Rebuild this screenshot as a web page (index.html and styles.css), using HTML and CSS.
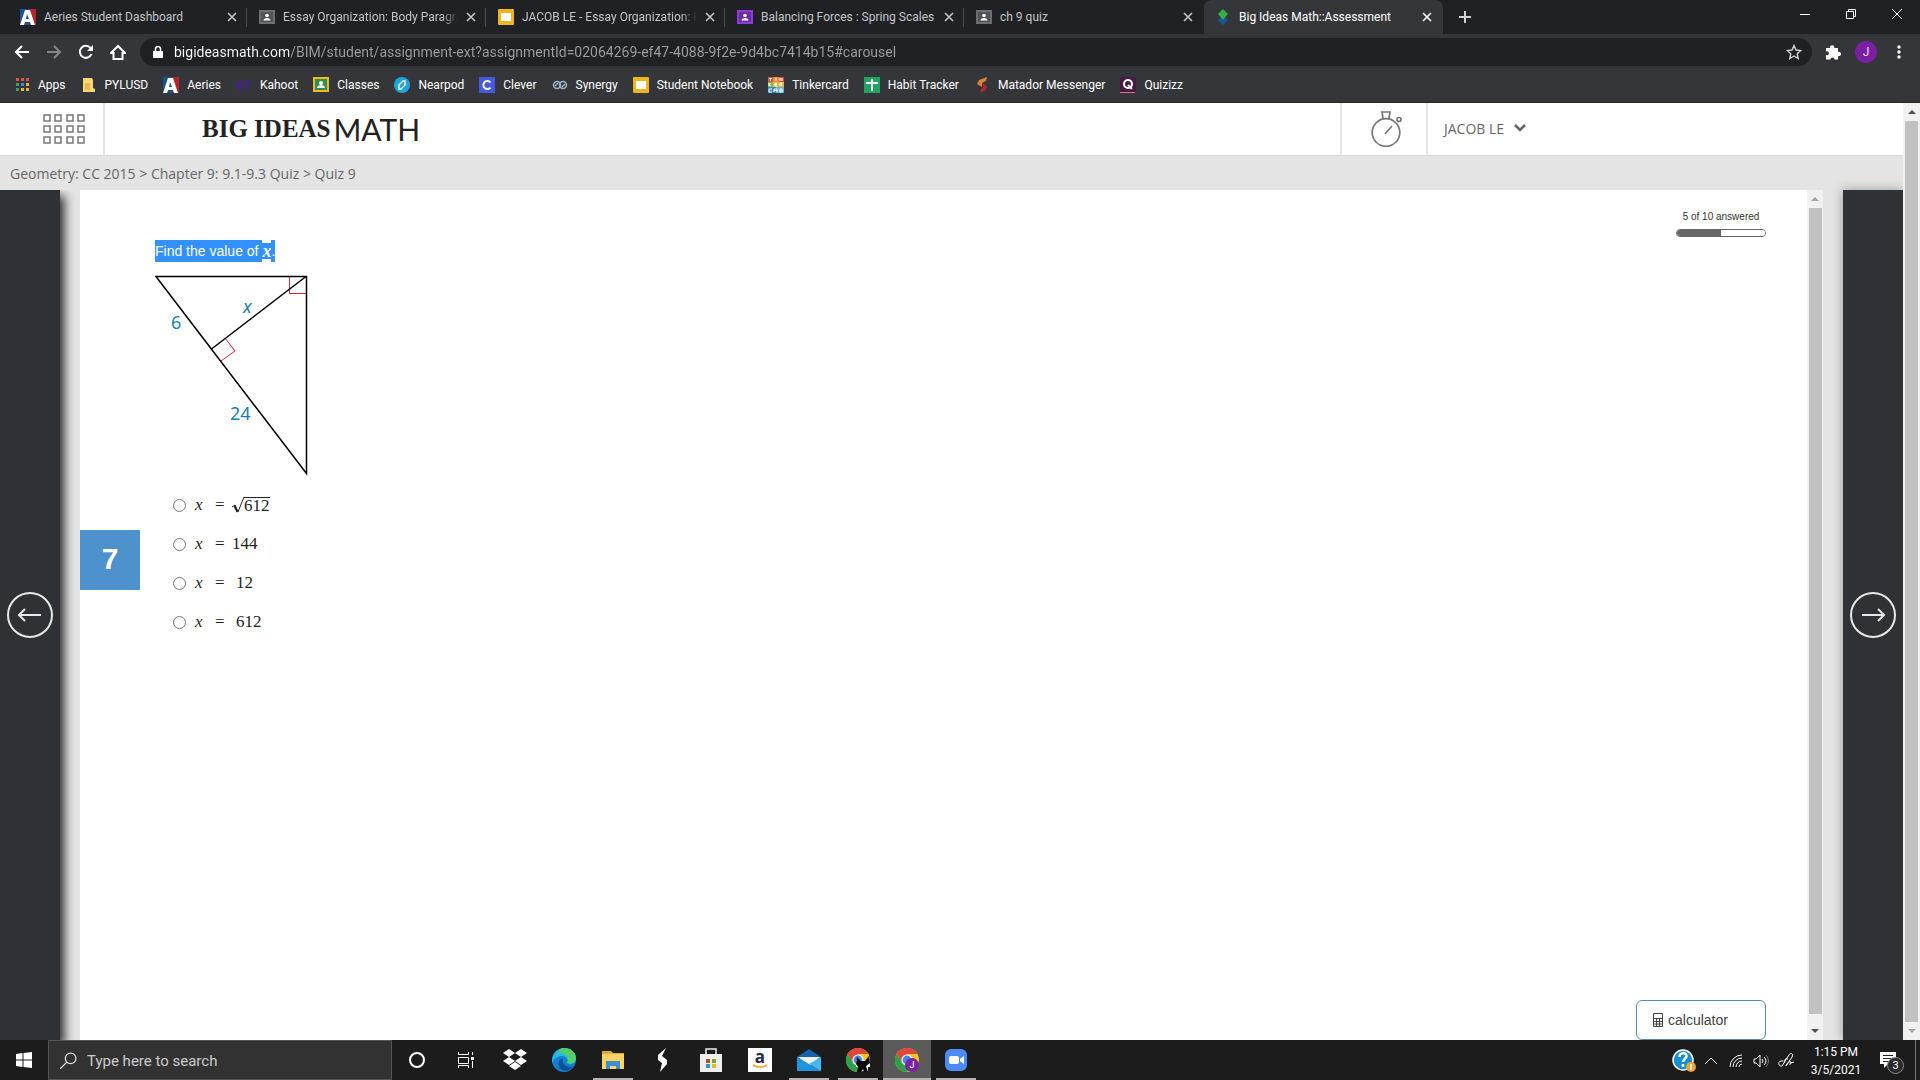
FILE: index.html
```html
<!DOCTYPE html>
<html lang="en">
<head>
  <meta charset="UTF-8">
  <meta name="viewport" content="width=device-width, initial-scale=1.0">
  <title>Big Ideas Math::Assessment</title>
  <link rel="stylesheet" href="styles.css">
</head>
<body>
  <!-- shared icons -->
  <svg class="defs" aria-hidden="true">
    <symbol id="aeries" viewBox="0 0 16 16"><path fill="#1c4f93" d="M0 0h10v16H0z"/><path fill="#b5232c" d="M10 0h6v16h-6z"/><path fill="#fff" d="M5 1h5l5 15h-4l-1-3H5l-1 3H0zm2 4l-1 5h3z"/></symbol>
    <symbol id="classroom" viewBox="0 0 16 16"><path fill="currentColor" d="M0 1h16v14H0z"/><path fill="#000" fill-opacity=".25" d="M2 3h12v10H2z"/><circle cx="8" cy="6.500" r="1.800" fill="#fff"/><path fill="#fff" d="M4.500 11.500c0-3.500 7-3.500 7 0z"/></symbol>
    <symbol id="slides" viewBox="0 0 16 16"><rect width="16" height="16" rx="1" fill="#f0b51b"/><path fill="#fff" d="M3 4h10v8H3z"/></symbol>
    <symbol id="close" viewBox="0 0 10 10"><path d="M1 1l8 8M9 1L1 9" stroke="currentColor" stroke-width="1.600" fill="none"/></symbol>
    <symbol id="chrome" viewBox="0 0 24 24"><circle cx="12" cy="12" r="12" fill="#f5c623"/><path fill="#e0463c" d="M1.600 6A12 12 0 0 1 22.400 6H12L7 15z"/><path fill="#2ba14b" d="M1.600 6A12 12 0 0 0 12 24l5-9-5 3-5-3z"/><circle cx="12" cy="12" r="5.600" fill="#fff"/><circle cx="12" cy="12" r="4.400" fill="#4683ea"/></symbol>
  </svg>

  <header class="browser">
    <div class="tab-strip">
      <div class="tab"><svg class="icon"><use href="#aeries"/></svg><span class="tab-title">Aeries Student Dashboard</span><button class="tab-close" aria-label="Close tab"><svg><use href="#close"/></svg></button></div>
      <div class="tab"><svg class="icon gray"><use href="#classroom"/></svg><span class="tab-title fade">Essay Organization: Body Paragraph</span><button class="tab-close" aria-label="Close tab"><svg><use href="#close"/></svg></button></div>
      <div class="tab"><svg class="icon"><use href="#slides"/></svg><span class="tab-title fade">JACOB LE - Essay Organization: Body</span><button class="tab-close" aria-label="Close tab"><svg><use href="#close"/></svg></button></div>
      <div class="tab"><svg class="icon purple"><use href="#classroom"/></svg><span class="tab-title">Balancing Forces : Spring Scales</span><button class="tab-close" aria-label="Close tab"><svg><use href="#close"/></svg></button></div>
      <div class="tab"><svg class="icon gray"><use href="#classroom"/></svg><span class="tab-title">ch 9 quiz</span><button class="tab-close" aria-label="Close tab"><svg><use href="#close"/></svg></button></div>
      <div class="tab active"><svg class="icon" viewBox="0 0 16 16"><path fill="#17579d" d="M8 6l5 5-5 5-5-5z"/><path fill="#3aaa45" d="M8 0l5 5-5 6-5-6z"/></svg><span class="tab-title">Big Ideas Math::Assessment</span><button class="tab-close" aria-label="Close tab"><svg><use href="#close"/></svg></button></div>
      <button class="new-tab" aria-label="New tab"><svg viewBox="0 0 12 12"><path d="M6 0v12M0 6h12" stroke="currentColor" stroke-width="2"/></svg></button>
      <div class="window-buttons">
        <button aria-label="Minimize"><svg viewBox="0 0 10 10"><path d="M0 5.500h10"/></svg></button>
        <button aria-label="Restore"><svg viewBox="0 0 10 10"><path d="M.5 2.500h7v7h-7zM2.500 2.500v-2h7v7h-2"/></svg></button>
        <button aria-label="Close"><svg viewBox="0 0 10 10"><path d="M0 0l10 10M10 0L0 10"/></svg></button>
      </div>
    </div>

    <div class="toolbar">
      <button aria-label="Back"><svg viewBox="0 0 16 16"><path d="M15 8H2M8 2L2 8l6 6"/></svg></button>
      <button aria-label="Forward" class="dim"><svg viewBox="0 0 16 16"><path d="M1 8h13M8 2l6 6-6 6"/></svg></button>
      <button aria-label="Reload"><svg viewBox="0 0 16 16"><path d="M13.500 10A6 6 0 1 1 12.500 4"/><path d="M15 1v6H9z" fill="currentColor" stroke="none"/></svg></button>
      <button aria-label="Home"><svg viewBox="0 0 16 16"><path d="M1 9l7-7 7 7h-2.500v6h-9V9z"/></svg></button>
      <div class="omnibox">
        <svg class="lock" viewBox="0 0 10 12"><path fill="currentColor" d="M0 5h10v7H0z"/><path d="M2.500 5V3a2.500 2.500 0 0 1 5 0v2" fill="none" stroke="currentColor" stroke-width="1.500"/></svg>
        <input class="url" type="text" aria-label="Address" value="bigideasmath.com/BIM/student/assignment-ext?assignmentId=02064269-ef47-4088-9f2e-9d4bc7414b15#carousel">
        <svg class="star" viewBox="0 0 16 16"><path d="M8 1.500l2 4.500 4.800.5-3.600 3.200 1 4.800L8 12l-4.200 2.500 1-4.800L1.200 6.500 6 6z" fill="none" stroke="currentColor" stroke-width="1.400"/></svg>
      </div>
      <button aria-label="Extensions"><svg viewBox="0 0 16 16"><path fill="currentColor" stroke="none" d="M1 4h4a2.200 2.200 0 1 1 4.200 0H13v4a2.200 2.200 0 1 1 0 4v3.500H9.500a2 2 0 1 0-4 0H1V11a2 2 0 1 0 0-3.500z"/></svg></button>
      <button class="avatar" aria-label="Profile">J</button>
      <button aria-label="Menu"><svg viewBox="0 0 16 16"><g fill="currentColor" stroke="none"><circle cx="8" cy="3" r="1.700"/><circle cx="8" cy="8" r="1.700"/><circle cx="8" cy="13" r="1.700"/></g></svg></button>
    </div>

    <nav class="bookmarks">
      <a href="#"><svg viewBox="0 0 16 16"><path fill="#dc5246" d="M2 1h3v3H2zM7 1h3v3H7zM12 1h3v3h-3z"/><path fill="#3f9c5c" d="M2 6h3v3H2z"/><path fill="#4a80d8" d="M7 6h3v3H7z"/><path fill="#e5b53a" d="M12 6h3v3h-3zM7 11h3v3H7zM12 11h3v3h-3z"/><path fill="#3f9c5c" d="M2 11h3v3H2z"/></svg>Apps</a>
      <a href="#"><svg viewBox="0 0 16 16"><path fill="#f8d775" d="M2 1h9l1 2v8l2 1v3H2z"/><path fill="#e9b94a" d="M4 6h5v7H4z"/></svg>PYLUSD</a>
      <a href="#"><svg><use href="#aeries"/></svg>Aeries</a>
      <a href="#"><svg viewBox="0 0 16 16"><path d="M2 4v9M7 4l-4 4 4 5M9 4l3 9M11 9l2-5" stroke="#46208a" stroke-width="2" fill="none"/></svg>Kahoot</a>
      <a href="#"><svg viewBox="0 0 16 16"><path fill="#f4b827" d="M0 0h16v15H0z"/><path fill="#2d9150" d="M2 2h12v11H2z"/><circle cx="8" cy="6" r="2" fill="#fff"/><path fill="#fff" d="M4 11c0-4 8-4 8 0z"/></svg>Classes</a>
      <a href="#"><svg viewBox="0 0 16 16"><circle cx="8" cy="8" r="8" fill="#1fa5dc"/><path d="M5 11V8l4-4h2v4l-4 4H5z" fill="none" stroke="#fff" stroke-width="1.300"/></svg>Nearpod</a>
      <a href="#"><svg viewBox="0 0 16 16"><path fill="#4858e0" d="M0 0h16v16H0z"/><path d="M11.500 5.500a4 4 0 1 0 0 5" fill="none" stroke="#fff" stroke-width="2"/></svg>Clever</a>
      <a href="#"><svg viewBox="0 0 16 16"><g fill="none" stroke="#9fb4c2" stroke-width="1.500"><circle cx="5" cy="8" r="3.500"/><circle cx="11" cy="8" r="3.500"/><path d="M3 9l3-3M10 10l3-3"/></g></svg>Synergy</a>
      <a href="#"><svg><use href="#slides"/></svg>Student Notebook</a>
      <a href="#"><svg viewBox="0 0 16 16"><path fill="#df5338" d="M0 0h5v5H0z"/><path fill="#ed8c35" d="M5 0h6v5H5z"/><path fill="#d7473b" d="M11 0h5v5h-5z"/><path fill="#8fba48" d="M0 5h5v5H0z"/><path fill="#e8b43a" d="M5 5h11v5H5z"/><path fill="#2c8cc4" d="M0 10h8v6H0z"/><path fill="#63b6d8" d="M8 10h8v6H8z"/><path stroke="#fff" d="M1 1.500h3M2.500 1v3M8 1v3M12 4V1l2 3V1M1 6v3M3 6L1 8l2 1M7 6v3h2M7 7.500h2M7 6.500h2M12 9V6h2l-1 2 1 1M4 12H1v3h3M6 15v-3h3v3M6 13.500h3M12 12v3h2v-3z" fill="none"/></svg>Tinkercard</a>
      <a href="#"><svg viewBox="0 0 16 16"><path fill="#1fa463" d="M0 0h16v16H0z"/><path fill="#fff" d="M7 2h2v12H7zM2 5h12v2H2z"/></svg>Habit Tracker</a>
      <a href="#"><svg viewBox="0 0 16 16"><path fill="#d58438" d="M13 0L5 3 3 7l5 3V6l4-2z"/><path fill="#a92b2b" d="M8 6l5 3-1 4-6 3 1-4 2-1z"/></svg>Matador Messenger</a>
      <a href="#"><svg viewBox="0 0 16 16"><path fill="#461a42" d="M0 0h16v16H0z"/><circle cx="8" cy="7" r="4" fill="none" stroke="#fff" stroke-width="2"/><path d="M8 8l4 4" stroke="#fff" stroke-width="2"/><path d="M0 15.500h15" stroke="#d9728c"/></svg>Quizizz</a>
    </nav>
  </header>

  <div class="viewport">
    <div class="page">
      <div class="site-header">
        <button class="apps" aria-label="Menu"><svg viewBox="0 0 42 30" fill="none" stroke="#777" stroke-width="1.500"><path d="M1 1h6v6H1zM12 1h6v6h-6zM24 1h6v6h-6zM35 1h6v6h-6zM1 12h6v6H1zM12 12h6v6h-6zM24 12h6v6h-6zM35 12h6v6h-6zM1 23h6v6H1zM12 23h6v6h-6zM24 23h6v6h-6zM35 23h6v6h-6z"/></svg></button>
        <h1 class="logo"><span class="logo-serif">BIG IDEAS</span> <span class="logo-sans">MATH</span></h1>
        <button class="timer" aria-label="Timer"><svg viewBox="0 0 32 36" fill="none" stroke="#777" stroke-width="1.700"><circle cx="15" cy="21.500" r="13.800"/><path d="M12 7.500L11 1h8l-1 6.500M14 23l7-8"/><circle cx="28" cy="8.500" r="2"/></svg></button>
        <button class="user">JACOB LE <svg viewBox="0 0 12 8"><path d="M1 1l5 5 5-5" fill="none" stroke="currentColor" stroke-width="2.500"/></svg></button>
      </div>
      <div class="breadcrumb">Geometry: CC 2015 &gt; Chapter 9: 9.1-9.3 Quiz &gt; Quiz 9</div>

      <main class="carousel">
        <div class="rail rail-left"><button aria-label="Previous question"><svg viewBox="0 0 46 46"><circle cx="23" cy="23" r="22"/><path d="M34 23H13M18 17l-6 6 6 6"/></svg></button></div>

        <section class="question">
          <div class="number">7</div>
          <div class="body">
            <p class="prompt"><mark>Find the value of </mark><mark class="var">x</mark><mark>.</mark></p>
            <svg class="figure" viewBox="0 0 160 206" role="img" aria-label="Right triangle with altitude x">
              <g fill="none" stroke="#e0263c"><path d="M134.500 4v16.500H151M70 65l10 13-14 10"/></g>
              <path d="M1 3.500h150.500v197zM151 3.500L56.500 76" fill="none" stroke="#000" stroke-width="1.500"/>
              <g class="labels"><text x="88" y="40" font-style="italic">x</text><text x="16" y="56">6</text><text x="75" y="147">24</text></g>
            </svg>
            <div class="choices">
              <label><input type="radio" name="answer"><i>x</i><span class="eq">=</span><span class="root"><svg viewBox="0 0 12 18"><path d="M0 11l3-2 3 7L12 1" fill="none" stroke="currentColor"/><path d="M2.500 10l3 6" stroke="currentColor" stroke-width="2"/></svg><span class="radicand">612</span></span></label>
              <label><input type="radio" name="answer"><i>x</i><span class="eq">=</span>144</label>
              <label><input type="radio" name="answer"><i>x</i><span class="eq">=</span><span class="spaced">12</span></label>
              <label><input type="radio" name="answer"><i>x</i><span class="eq">=</span><span class="spaced">612</span></label>
            </div>
          </div>
          <div class="side">
            <div class="answered"><label for="answered">5 of 10 answered</label><progress id="answered" value="5" max="10"></progress></div>
            <button class="calculator"><svg viewBox="0 0 10 14" fill="none" stroke="currentColor"><path d="M.5.5h9v13h-9zM.5 5.500h9M.5 8.500h9M.5 11h9M3.500 5.500v8M6.500 5.500v8"/></svg>calculator</button>
          </div>
        </section>
        <div class="scrollbar inner"><span class="arrow up"></span><span class="thumb"></span><span class="arrow down"></span></div>

        <div class="rail rail-right"><button aria-label="Next question"><svg viewBox="0 0 46 46"><circle cx="23" cy="23" r="22"/><path d="M12 23h21M28 17l6 6-6 6"/></svg></button></div>
      </main>
    </div>
    <div class="scrollbar outer"><span class="arrow up"></span><span class="thumb"></span><span class="arrow down"></span></div>
  </div>

  <footer class="taskbar">
    <button class="start" aria-label="Start"><svg viewBox="0 0 16 16"><path fill="#fff" d="M0 2l6.500-1v6.500H0zM7.500 1L16 0v7.500H7.500zM0 8.500h6.500V15L0 14zM7.500 8.500H16V16l-8.500-1z"/></svg></button>
    <label class="search"><svg viewBox="0 0 16 16" fill="none" stroke="#ddd" stroke-width="1.200"><circle cx="10" cy="6" r="5"/><path d="M6.500 9.500L0 16"/></svg><input type="text" placeholder="Type here to search" aria-label="Search"></label>
    <div class="apps-row">
      <button aria-label="Cortana"><svg viewBox="0 0 24 24"><circle cx="12" cy="12" r="7" fill="none" stroke="#fff" stroke-width="2"/></svg></button>
      <button aria-label="Task view"><svg viewBox="0 0 24 24"><path d="M4.500 4v2.500h10V4M4.500 20v-2.500h10V20M4.500 9.500h10v6h-10zM18.500 4v3M18.500 13v7" fill="none" stroke="#fff"/><path fill="#fff" d="M17 9h3v3h-3z"/></svg></button>
      <button aria-label="Dropbox"><svg viewBox="0 0 24 24"><path fill="#fff" d="M6 1l6 4-6 4-6-4zM18 1l6 4-6 4-6-4zM6 9l6 4-6 4-6-4zM18 9l6 4-6 4-6-4zM12 14l6 4-6 4-6-4z"/></svg></button>
      <button aria-label="Edge"><svg viewBox="0 0 24 24"><circle cx="12" cy="12" r="12" fill="#1580d3"/><path fill="#29b8e0" d="M0 12C1 4 7 0 12 0c7 0 12 5 12 10 0 5-5 7-9 5 2-3 0-7-5-7-5 0-9 3-10 8z"/><path fill="#4fd06d" d="M12 0c7 0 12 5 12 10 0 5-5 7-9 5 3-5-1-10-8-10 0-3 2-5 5-5z"/><path fill="#0f4f96" d="M11 10c-2 6 4 11 11 8-3 4-8 6-12 4-5-3-5-10 1-12z"/></svg></button>
      <button class="open" aria-label="File Explorer"><svg viewBox="0 0 24 24"><path fill="#e1a92e" d="M1 3h9l2 2h11v4H1z"/><path fill="#fbd467" d="M1 6h22v15H1z"/><path fill="#3d8fd1" d="M5 13h14v8h-4v-3H9v3H5z"/></svg></button>
      <button aria-label="Stride"><svg viewBox="0 0 24 24"><path fill="#fff" d="M16 0L8 7v5l4 3-2 9 7-8v-4l-5-4z"/></svg></button>
      <button aria-label="Store"><svg viewBox="0 0 24 24"><path d="M7 7V1h10v6" fill="none" stroke="#eee" stroke-width="1.500"/><path fill="#eee" d="M1 6h22v18H1z"/><path fill="#b3541e" d="M7 11h4v4H7z"/><path fill="#79a72c" d="M13 11h4v4h-4z"/><path fill="#2b93d1" d="M7 16h4v4H7z"/><path fill="#efb52d" d="M13 16h4v4h-4z"/></svg></button>
      <button aria-label="Amazon"><svg viewBox="0 0 24 24"><path fill="#fff" d="M0 0h24v24H0z"/><text x="12" y="15" text-anchor="middle" class="amazon">a</text><path d="M5 17c5 3 9 3 14 0" fill="none" stroke="#f4a12b" stroke-width="1.500"/></svg></button>
      <button class="open" aria-label="Mail"><svg viewBox="0 0 24 24"><path fill="#1464ad" d="M0 9l12-8 12 8v6H0z"/><path fill="#f1f1f1" d="M1 9h22l-10 9z"/><path fill="#1e94dd" d="M0 9l24 14H0z"/><path fill="#49b5ee" d="M24 9v14L12 16z"/></svg></button>
      <button class="open" aria-label="Chrome"><svg viewBox="0 0 24 24"><use href="#chrome"/><path fill="#fff" d="M10 12h4l3 2 3-2h4v7h-2v4H12v-4h-2z"/><path fill="#080808" d="M11 9l4 4h4l4-5 1 7-4 3 2 6h-4l-1-3-2 3h-4l1-5-2-3z"/></svg></button>
      <button class="open current" aria-label="Chrome, J"><svg viewBox="0 0 24 24"><use href="#chrome"/><circle cx="17" cy="17" r="7" fill="#7724a5"/><text x="17" y="20" text-anchor="middle" class="badge-j">J</text></svg></button>
      <button class="open" aria-label="Zoom"><svg viewBox="0 0 24 24"><rect x="1" y="1" width="22" height="22" rx="6" fill="#4a8cf5"/><rect x="5" y="8" width="10" height="8" rx="2" fill="#fff"/><path fill="#fff" d="M16 11l4-3v8l-4-3z"/></svg></button>
    </div>
    <div class="tray">
      <svg class="help" viewBox="0 0 24 24"><circle cx="11" cy="11" r="10" fill="#1791cb" stroke="#fff" stroke-width="1.500"/><path d="M7.500 8c0-5 7-5 7-1 0 3-3.500 3-3.500 6M11 15v3" fill="none" stroke="#fff" stroke-width="2.500"/><circle cx="19" cy="18" r="5" fill="#f2a33a"/><path d="M19 15v6" stroke="#fff" stroke-width="1.500"/></svg>
      <svg class="small" viewBox="0 0 16 16"><path d="M2 11l6-6 6 6"/></svg>
      <svg class="small" viewBox="0 0 16 16"><path d="M2 14A12 12 0 0 1 14 2M5 14a9 9 0 0 1 9-9M8 14a6 6 0 0 1 6-6M11 14a3 3 0 0 1 3-3"/></svg>
      <svg class="small" viewBox="0 0 16 16"><path d="M1 6h2l4-4v12l-4-4H1zM9 6q2 2 0 4M11 4q4 4 0 8"/><path stroke="#777" d="M13 2q5 6 0 12"/></svg>
      <svg class="small" viewBox="0 0 16 16"><path d="M5 8c-6-1-5 6-1 5L11 2c2-3 5-1 3 2L8 13M7 10c-2-2 0-5 3-4M8 13c1-3 3-5 5-4 1 1-1 3-2 2M12 10l4-1"/></svg>
      <div class="clock"><time>1:15 PM</time><time>3/5/2021</time></div>
      <button class="notifications" aria-label="Notifications"><svg viewBox="0 0 16 16"><path fill="#fff" d="M0 0h16v12h-8l-4 4v-4H0z"/><path stroke="#222" d="M3 3.500h10M3 6.500h10M3 9.500h7"/></svg><span class="count">3</span></button>
    </div>
  </footer>
</body>
</html>
```

FILE: styles.css
```css
* { box-sizing: border-box; }
body { margin: 0; height: 100vh; display: flex; flex-direction: column; overflow: hidden; font-family: Roboto, sans-serif; font-size: 12px; background: #fff; }
button { border: 0; padding: 0; background: none; color: inherit; font: inherit; }
svg { display: block; flex: none; }
.defs { position: absolute; width: 0; height: 0; }

/* browser */
.browser { background: #35363a; color: #fff; border-bottom: 1px solid #28292c; }
.tab-strip { display: flex; height: 34px; background: #202124; }
.tab { display: flex; align-items: center; flex: 0 1 239px; min-width: 0; padding: 0 10px 0 11px; color: #c3c6ca; border-right: 1px solid transparent; }
.tab:first-child { flex-basis: 248px; padding-left: 20px; }
.tab:not(.active) { background: linear-gradient(#4a4c50, #4a4c50) right 8px / 1px 19px no-repeat; }
.tab:nth-child(5) { background: none; }
.tab.active { background: #35363a; color: #fff; border-radius: 8px 8px 0 0; }
.icon { width: 16px; height: 16px; }
.gray { color: #6b6f74; }
.purple { color: #8e3bdc; }
.tab-title { flex: 1; margin: 0 4px 0 8px; white-space: nowrap; overflow: hidden; }
.fade { margin-right: 8px; -webkit-mask: linear-gradient(to left, transparent, #000 16px); mask: linear-gradient(to left, transparent, #000 16px); }
.tab-close svg { width: 10px; height: 10px; }
.new-tab { width: 44px; color: #d0d2d5; }
.new-tab svg { width: 12px; height: 12px; margin: 0 auto; }
.window-buttons { display: flex; margin-left: auto; }
.window-buttons button { width: 46px; height: 28px; }
.window-buttons svg { width: 10px; height: 10px; margin: 0 auto; fill: none; stroke: #fff; }
.toolbar { display: flex; align-items: center; height: 32px; margin-top: 2px; padding: 0 5px 0 6px; }
.toolbar > button { width: 32px; height: 28px; }
.toolbar > button svg { width: 16px; height: 16px; margin: 0 auto; fill: none; stroke: currentColor; stroke-width: 2; }
.toolbar .dim { color: #85868a; }
.omnibox { display: flex; align-items: center; flex: 1; height: 28px; margin: 0 5px 0 6px; padding: 0 10px 0 13px; border-radius: 14px; background: #202124; }
.lock { width: 10px; height: 12px; }
.url { flex: 1; min-width: 0; margin-left: 11px; padding: 0; border: 0; outline: 0; font: 14px Roboto, sans-serif; color: transparent; background: linear-gradient(to right, #fff 115px, #9aa0a6 115px); -webkit-background-clip: text; background-clip: text; }
.star { width: 16px; height: 16px; color: #d0d2d5; }
.toolbar > .avatar { width: 22px; height: 22px; margin: 0 6px; border-radius: 50%; background: #7b1fa2; color: #eddcf5; }
.bookmarks { display: flex; align-items: center; gap: 15px; height: 34px; padding: 0 14px 1px; }
.bookmarks a { display: flex; align-items: center; gap: 8px; color: #fff; text-decoration: none; white-space: nowrap; }
.bookmarks svg { width: 16px; height: 16px; }

/* page */
.viewport { flex: 1; min-height: 0; display: flex; }
.page { flex: 1; min-width: 0; display: flex; flex-direction: column; background: #e4e4e4; }
.site-header { display: flex; align-items: stretch; height: 53px; background: #fff; border-bottom: 1px solid #d8d8d8; color: #666; }
.apps { width: 105px; padding-left: 43px; border-right: 2px solid #e2e2e2; }
.apps svg { width: 42px; height: 30px; }
.logo { display: flex; align-items: center; gap: 3px; margin: 0 auto 0 97px; color: #222; font-weight: normal; }
.logo-serif { font: bold 25px "Liberation Serif", serif; }
.logo-sans { font: 30px Lato, sans-serif; }
.timer { width: 88px; padding-left: 29px; border: solid #e2e2e2; border-width: 0 2px; }
.timer svg { width: 32px; height: 36px; }
.user { display: flex; align-items: center; gap: 10px; width: 475px; padding: 0 0 2px 16px; font: 14px "Open Sans", sans-serif; }
.user svg { width: 12px; height: 8px; }
.breadcrumb { height: 34px; line-height: 36px; padding-left: 10px; font-family: "Open Sans", sans-serif; font-size: 14px; color: #666; }
.carousel { flex: 1; min-height: 0; display: flex; }
.rail { flex: 0 0 60px; display: flex; align-items: center; justify-content: center; background: #2e3236; }
.rail-left { margin-right: 20px; box-shadow: 4px 6px 10px #222; clip-path: inset(0 -20px 0 0); }
.rail-right { margin-left: 20px; box-shadow: 0 0 10px #999; }
.rail svg { width: 46px; height: 46px; fill: none; stroke: #e8e8e8; stroke-width: 2; }
.question { flex: 1; min-width: 0; display: flex; background: #fff; }
.number { width: 60px; height: 60px; margin-top: 340px; background: #4d92cd; color: #fff; font: bold 30px/58px "Liberation Sans", sans-serif; text-align: center; }
.body { flex: 1; padding: 50px 0 0 15px; }
.prompt { display: flex; align-items: center; height: 22px; margin: 0; font: 14px/22px "Liberation Sans", sans-serif; white-space: pre; }
mark { background: #3390ff; color: #fff; }
.var { font: italic bold 18px/16px "Liberation Serif", serif; }
.figure { width: 160px; height: 206px; margin: 11px 0 14px; }
.labels { fill: #1b7fb5; font: 18px "Noto Sans", sans-serif; }
.choices { display: flex; flex-direction: column; gap: 15px; padding-left: 18px; font: 17px/24px "Liberation Serif", serif; color: #222; }
.choices label { display: flex; align-items: center; height: 24px; }
.choices input { width: 13px; height: 13px; margin: 0 9px 0 0; }
.choices i { width: 20px; }
.eq { width: 17px; }
.spaced { padding-left: 4px; }
.root { display: flex; align-items: center; }
.root svg { width: 12px; height: 18px; }
.radicand { border-top: 1px solid; line-height: 16px; height: 17px; }
.side { display: flex; flex-direction: column; justify-content: space-between; align-items: flex-end; padding: 20px 41px 0 0; }
.answered { display: flex; flex-direction: column; align-items: center; gap: 5px; width: 90px; font: 10px/14px "Liberation Sans", sans-serif; color: #333; }
progress { appearance: none; width: 90px; height: 8px; border: 1px solid #666; border-radius: 4px; overflow: hidden; }
progress::-webkit-progress-bar { background: #fff; }
progress::-webkit-progress-value { background: #666; }
.calculator { display: flex; align-items: center; gap: 5px; width: 130px; height: 40px; padding-left: 16px; border: 1px solid #588ba8; border-radius: 6px; font: 14px "Liberation Sans", sans-serif; color: #444; }
.calculator svg { width: 10px; height: 14px; }
.scrollbar { display: flex; flex-direction: column; align-items: center; background: #f1f1f1; }
.inner { flex: 0 0 16px; }
.outer { flex: 0 0 17px; }
.thumb { flex: 1; width: 13px; background: #c1c1c1; }
.arrow { display: flex; align-items: center; justify-content: center; height: 18px; }
.arrow::before { content: ""; border: 4px solid transparent; }
.up::before { border-top: 0; border-bottom-color: #505050; }
.down::before { border-bottom: 0; border-top-color: #505050; }
.inner .down { height: 26px; padding-top: 8px; }
.inner .up::before { border-bottom-color: #a3a3a3; }
.outer .down::before { border-top-color: #a3a3a3; }

/* taskbar */
.taskbar { display: flex; flex: 0 0 40px; background: #1c1c1c; color: #fff; }
.start { width: 48px; }
.start svg { width: 16px; height: 16px; margin: 0 auto; }
.search { display: flex; align-items: center; gap: 10px; width: 344px; padding: 1px 0 0 11px; background: #323232; border: 1px solid #555; }
.search svg { width: 17px; height: 17px; }
.search input { flex: 1; min-width: 0; padding: 0; border: 0; outline: 0; background: none; color: #ccc; font: 15px Roboto, sans-serif; }
.search input::placeholder { color: #ccc; }
.apps-row { display: flex; gap: 1px; padding-left: 1px; }
.apps-row button { width: 48px; }
.apps-row svg { width: 24px; height: 24px; margin: 0 auto; }
.open { background: linear-gradient(#b9b2b2, #b9b2b2) center bottom / 40px 2px no-repeat; }
.current { background-color: #5a5a5a; background-size: 48px 2px; }
.amazon { font: bold 17px "Open Sans", sans-serif; fill: #232f3e; }
.badge-j { font: 9px Roboto, sans-serif; fill: #fff; }
.tray { display: flex; align-items: center; margin-left: auto; margin-right: 4px; padding: 1px 7px 0 0; border-right: 1px solid #777; }
.help { width: 24px; height: 24px; margin-right: 7px; }
.small { width: 16px; height: 16px; margin-right: 9px; fill: none; stroke: #fff; }
.clock { display: flex; flex-direction: column; align-items: center; width: 66px; line-height: 18px; }
.notifications { display: flex; width: 28px; height: 18px; margin-left: 11px; position: relative; }
.notifications svg { width: 16px; height: 16px; }
.count { position: absolute; left: 7px; top: 5px; width: 17px; height: 17px; border: 1px solid #888; border-radius: 50%; background: #2b2b2b; font-size: 11px; line-height: 15px; text-align: center; }
```
